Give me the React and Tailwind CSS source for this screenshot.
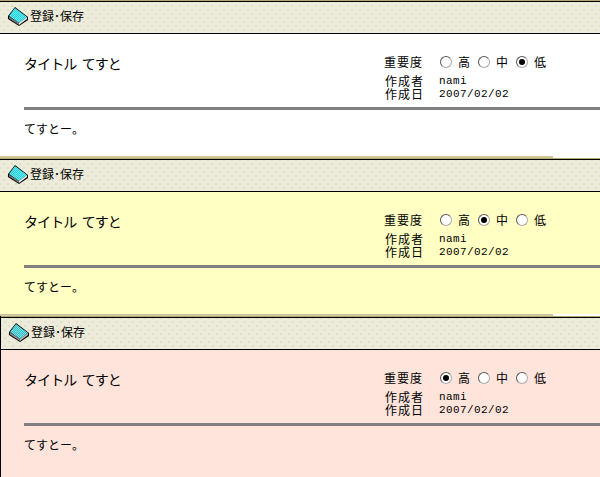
const FONT = "font-['Noto_Sans_CJK_JP','DejaVu_Sans',sans-serif]";

const LEVELS = ['高', '中', '低'];

function BookIcon({ id, muted }) {
  return (
    <svg width="23" height="20" viewBox="0 0 23 20" className="shrink-0">
      <defs>
        <pattern id={id} width="2" height="2" patternUnits="userSpaceOnUse">
          <rect width="2" height="2" fill={muted ? '#2fc0c8' : '#27d3dc'} />
          <rect width="1" height="1" fill={muted ? '#7fdfe4' : '#66e6ee'} />
          <rect x="1" y="1" width="1" height="1" fill={muted ? '#7fdfe4' : '#66e6ee'} />
        </pattern>
      </defs>
      <path d="M1 10 L8 1 L21 11 L21 14 L12 20 L1 13 Z" fill="#000" />
      <path d="M2 10 L8 2 L20 11 L12 17 Z" fill={`url(#${id})`} />
      <path d="M2 10.5 L12 17 L12 19 L2 12.5 Z" fill={muted ? '#8f8f8f' : '#777'} />
      <path d="M12 17 L20 11 L20 13 L12 19 Z" fill={muted ? '#b8b8b8' : '#eee'} />
    </svg>
  );
}

function Radio({ checked }) {
  return (
    <span className="flex h-3 w-3 items-center justify-center rounded-full border border-t-[#555] border-l-[#555] border-r-[#aaa] border-b-[#aaa] bg-white">
      {checked && <span className="h-1.5 w-1.5 rounded-full bg-black" />}
    </span>
  );
}

function Panel({ id, bg, level, heightClass, tail, third }) {
  return (
    <section className={third ? 'border-l border-black' : ''}>
      <div className="h-px bg-[#b5a67a]" />
      <div className="h-px bg-black" />
      <div className="flex h-[31px] items-center bg-[#ecebdc] bg-[radial-gradient(#d6d2a0_0.6px,transparent_0.8px),radial-gradient(#d6d2a0_0.6px,transparent_0.8px)] bg-size-[8px_8px] bg-position-[0_0,4px_4px] pb-[3px] pl-[7px]">
        <BookIcon id={id} muted={third} />
        <span className="text-[12px] leading-none text-black">登録･保存</span>
      </div>
      <div className="h-px bg-black" />
      <div className={`${bg} ${heightClass} ${third ? 'pl-[23px]' : 'pl-6'}`}>
        <div className="flex h-[73px] pt-[19px]">
          <h2 className="mt-[1px] w-[360px] text-[14px] leading-[18px] font-normal tracking-[-0.9px] [word-spacing:3px] text-black">タイトル てすと</h2>
          <div className="text-[12px] tracking-[1px] text-black">
            <div className="flex h-[18px] items-center">
              <span className="w-[56px]">重要度</span>
              {LEVELS.map((label, i) => (
                <span key={label} className="mr-[7px] flex items-center gap-1.5">
                  <Radio checked={i === level} />
                  <span>{label}</span>
                </span>
              ))}
            </div>
            <div className="mt-1 flex h-[12px] items-center leading-none">
              <span className="w-[55px] pl-px">作成者</span>
              <span className="font-['Liberation_Mono',monospace] text-[11px] tracking-[0.4px]">nami</span>
            </div>
            <div className="mt-px flex h-[12px] items-center leading-none">
              <span className="w-[55px] pl-px">作成日</span>
              <span className="font-['Liberation_Mono',monospace] text-[11px] tracking-[0.4px]">2007/02/02</span>
            </div>
          </div>
        </div>
        <div className="h-[3px] bg-[#808080]" />
        <p className="pt-[11px] text-[12px] leading-[16px] text-black">てすとー。</p>
      </div>
      {tail && <div className="h-[2px] w-[553px] bg-[#cfc69b]" />}
    </section>
  );
}

export default function App() {
  return (
    <div className={`h-[477px] w-[600px] overflow-hidden bg-white ${FONT}`}>
      <Panel id="book-a" bg="bg-white" level={2} heightClass="h-[122px]" tail />
      <Panel id="book-b" bg="bg-[#ffffc4]" level={1} heightClass="h-[122px]" tail />
      <Panel id="book-c" bg="bg-[#ffe4dc]" level={0} heightClass="h-[127px]" third />
    </div>
  );
}
